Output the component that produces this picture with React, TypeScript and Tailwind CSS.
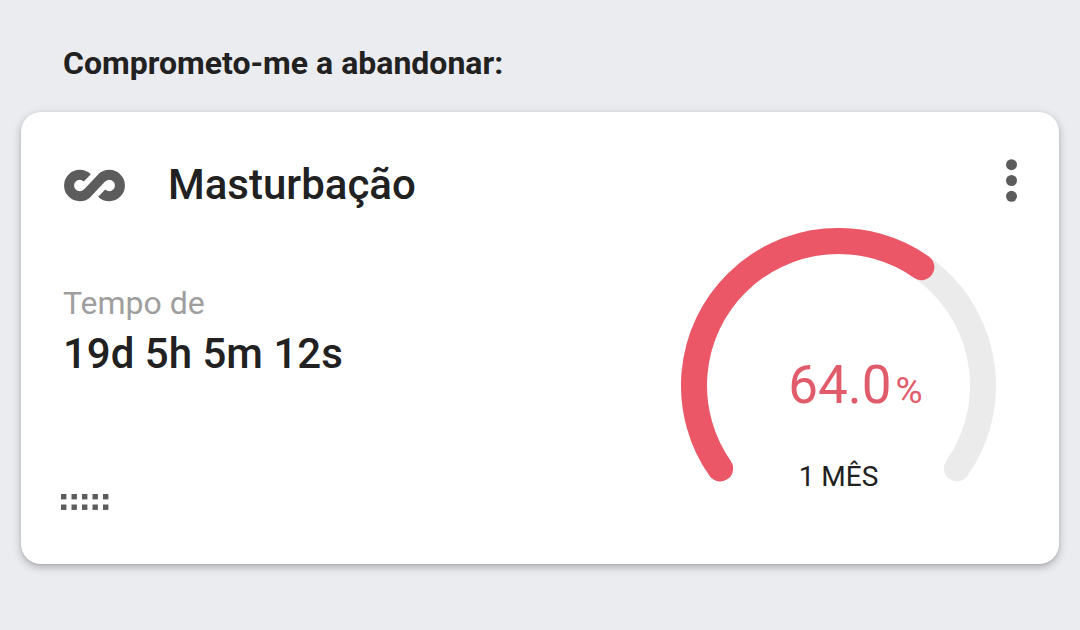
const START_ANGLE = 145;
const SWEEP = 250;
const RADIUS = 144.5;
const CENTER = 157.5;

const addiction = {
  name: "Masturbação",
  elapsed: "19d 5h 5m 12s",
  percent: 64,
  goal: "1 MÊS",
};

const pointAt = (angle: number) => {
  const rad = (angle * Math.PI) / 180;
  return `${CENTER + RADIUS * Math.cos(rad)} ${CENTER + RADIUS * Math.sin(rad)}`;
};

const arcPath = (sweep: number) =>
  `M ${pointAt(START_ANGLE)} A ${RADIUS} ${RADIUS} 0 ${
    sweep > 180 ? 1 : 0
  } 1 ${pointAt(START_ANGLE + sweep)}`;

const InfinityIcon = () => (
  <svg
    width="62"
    height="34"
    viewBox="0 0 62 34"
    fill="none"
    stroke="#5c5c5c"
    strokeWidth="10"
    aria-hidden="true"
  >
    <path d="M24.3 9.9A10.7 10.7 0 1 0 24.3 25.1L38.7 9.9A10.7 10.7 0 1 1 38.7 25.1" />
  </svg>
);

const MoreIcon = () => (
  <svg width="12" height="48" viewBox="0 0 12 48" fill="#5c5c5c">
    <circle cx="6.5" cy="7.7" r="5.5" />
    <circle cx="6.5" cy="23.5" r="5.5" />
    <circle cx="6.5" cy="39.3" r="5.5" />
  </svg>
);

const DragIcon = () => (
  <svg width="48" height="16" viewBox="0 0 48 16" fill="#5c5c5c">
    {[0, 10.5, 21, 31.5, 42].map((x) => (
      <g key={x}>
        <rect x={x} y="0" width="5.4" height="5.4" />
        <rect x={x} y="10.5" width="5.4" height="5.4" />
      </g>
    ))}
  </svg>
);

const Gauge = ({ percent, goal }: { percent: number; goal: string }) => (
  <div className="relative shrink-0">
    <svg width="315" height="265" viewBox="0 0 315 265" fill="none" aria-hidden="true">
      <g strokeWidth="26" strokeLinecap="round">
        <path d={arcPath(SWEEP)} stroke="#ebebeb" />
        <path d={arcPath((SWEEP * percent) / 100)} stroke="#eb5766" />
      </g>
    </svg>
    <div className="absolute inset-x-0 bottom-0 flex flex-col items-center">
      <p className="flex items-baseline gap-1 pl-[34px] text-[53px] leading-[64px] text-[#e05c6b]">
        {percent.toFixed(1)}
        <span className="text-[37px]">%</span>
      </p>
      <p className="mt-[38px] text-[28px] leading-8 text-[#212121]">{goal}</p>
    </div>
  </div>
);

const AddictionCard = () => (
  <article className="rounded-[20px] bg-white pt-[45px] pr-[42px] pb-[54px] pl-10 shadow-[0_3px_8px_rgba(0,0,0,0.28),0_1px_2px_rgba(0,0,0,0.08)]">
    <header className="flex items-start justify-between">
      <div className="flex items-center gap-[43px] pl-0.5">
        <InfinityIcon />
        <h2 className="text-[42px] leading-[56px] font-medium text-[#212121]">
          {addiction.name}
        </h2>
      </div>
      <button type="button" aria-label="Mais opções" className="cursor-pointer">
        <MoreIcon />
      </button>
    </header>

    <div className="mt-[15px] flex items-start justify-between pr-[21px]">
      <div className="flex flex-col items-start pt-[55px]">
        <div className="pl-0.5">
          <p className="text-[32px] leading-10 text-[#9e9e9e]">Tempo de</p>
          <p className="text-[42px] leading-[62px] font-medium text-[#212121]">
            {addiction.elapsed}
          </p>
        </div>
        <button
          type="button"
          aria-label="Reordenar"
          className="mt-[109px] cursor-grab"
        >
          <DragIcon />
        </button>
      </div>
      <Gauge percent={addiction.percent} goal={addiction.goal} />
    </div>
  </article>
);

const App = () => {
  return (
    <main className="min-h-screen bg-[#ebecf0] px-[21px] pt-[43px] pb-16 font-[Roboto,sans-serif]">
      <h1 className="mb-[29px] px-[42px] text-[32px] leading-10 font-bold text-[#212121]">
        Comprometo-me a abandonar:
      </h1>
      <AddictionCard />
    </main>
  );
};

export default App;
